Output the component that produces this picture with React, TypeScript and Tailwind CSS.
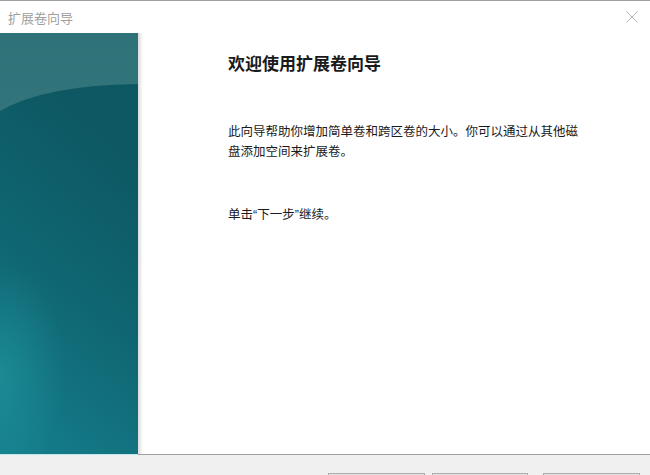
import React from "react";

const cjk = { fontFamily: '"Microsoft YaHei", "Noto Sans CJK SC", "Noto Sans", sans-serif' };
const q = { fontFamily: '"Liberation Sans", "Noto Sans CJK SC", sans-serif' };

function SidePanel() {
  return (
    <svg width="138" height="421" viewBox="0 0 138 421" className="block shrink-0">
      <defs>
        <linearGradient id="topg" x1="0" y1="0" x2="0" y2="1">
          <stop offset="0" stopColor="#2f7278" />
          <stop offset="1" stopColor="#3e7e85" />
        </linearGradient>
        <linearGradient id="botg" x1="0.3" y1="0" x2="0" y2="1">
          <stop offset="0" stopColor="#0d5863" />
          <stop offset="0.45" stopColor="#0f6672" />
          <stop offset="1" stopColor="#167f8d" />
        </linearGradient>
        <radialGradient id="leftg" cx="0" cy="340" r="110" gradientUnits="userSpaceOnUse" gradientTransform="translate(0 340) scale(0.6 1) translate(0 -340)">
          <stop offset="0" stopColor="#24a3a6" stopOpacity="0.45" />
          <stop offset="1" stopColor="#24a3a6" stopOpacity="0" />
        </radialGradient>
      </defs>
      <rect x="0" y="0" width="138" height="421" fill="url(#topg)" />
      <path d="M0,78 Q45,52 138,51 L138,421 L0,421 Z" fill="url(#botg)" />
      <rect x="0" y="200" width="138" height="221" fill="url(#leftg)" />
    </svg>
  );
}

export default function App() {
  return (
    <div className="w-[650px] h-[475px] bg-white flex flex-col border-t border-[#9e9e9e] overflow-hidden" style={cjk}>
      <div className="h-[32px] flex items-center justify-between pl-[8px] pr-[12px] shrink-0">
        <span className="text-[13px] text-[#a0a0a0] leading-none">扩展卷向导</span>
        <svg width="12" height="12" viewBox="0 0 12 12" className="block">
          <path d="M0.5 0.5 L11.5 11.5 M11.5 0.5 L0.5 11.5" stroke="#b8b8b8" strokeWidth="1" />
        </svg>
      </div>
      <div className="flex h-[421px] shrink-0">
        <SidePanel />
        <div className="w-[5px] shrink-0 bg-gradient-to-r from-[#dcdcdc] to-white" />
        <div className="flex-1 pl-[85px] pt-[20px] text-[#1a1a1a]">
          <div className="text-[17px] font-bold leading-[20px]">欢迎使用扩展卷向导</div>
          <p className="mt-[48px] text-[12.5px] leading-[20px] whitespace-nowrap">
            此向导帮助你增加简单卷和跨区卷的大小。你可以通过从其他磁
            <br />
            盘添加空间来扩展卷。
          </p>
          <p className="mt-[43px] text-[12.5px] leading-[20px]">
            单击<span style={q}>“</span>下一步<span style={q}>”</span>继续。
          </p>
        </div>
      </div>
      <div className="h-[1px] bg-[#a0a0a0] shrink-0 ml-[138px]" />
      <div className="flex-1 bg-[#f0f0f0] relative flex">
        <div className="w-[138px] h-[1px] bg-[#bfe6ea] absolute top-[-1px] left-0" />
        <div className="flex pt-[18px] pl-[328px] gap-[7px]">
          <div className="w-[97px] h-[24px] border border-[#adadad] bg-[#e1e1e1]" />
          <div className="w-[96px] h-[24px] border border-[#adadad] bg-[#e1e1e1]" />
          <div className="w-[97px] h-[24px] border border-[#adadad] bg-[#e1e1e1] ml-[8px]" />
        </div>
      </div>
    </div>
  );
}
